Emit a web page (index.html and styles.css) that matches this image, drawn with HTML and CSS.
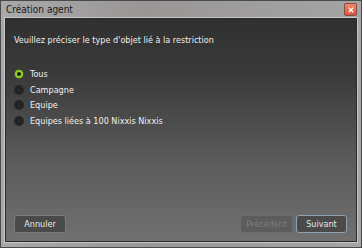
FILE: index.html
```html
<!DOCTYPE html>
<html lang="fr">
<head>
<meta charset="UTF-8" />
<title>Création agent</title>
<link rel="stylesheet" href="styles.css">
</head>
<body>
<div class="window">
  <div class="titlebar">
    <span class="title">Création agent</span>
    <span class="close" aria-label="Fermer">
      <svg viewBox="0 0 8 8" width="6" height="6"><path d="M1 1L7 7M7 1L1 7" stroke="#fff" stroke-width="1.6"/></svg>
    </span>
  </div>
  <div class="panel">
    <p class="prompt">Veuillez préciser le type d'objet lié à la restriction</p>
    <ul class="choices">
      <li class="choice selected"><span class="radio"></span>Tous</li>
      <li class="choice"><span class="radio"></span>Campagne</li>
      <li class="choice"><span class="radio"></span>Equipe</li>
      <li class="choice"><span class="radio"></span>Equipes liées à 100 Nixxis Nixxis</li>
    </ul>
    <div class="actions">
      <button class="btn">Annuler</button>
      <span class="spacer"></span>
      <button class="btn" disabled>Précédent</button>
      <button class="btn primary">Suivant</button>
    </div>
  </div>
</div>
</body>
</html>
```

FILE: styles.css
```css
body {
  margin: 0;
  background: #fff;
  font-family: "Liberation Sans Narrow", "DejaVu Sans Condensed", "Open Sans", sans-serif;
}
.window {
  width: 362px;
  height: 248px;
  box-sizing: border-box;
  border: 1px solid #4a4a4a;
  background: linear-gradient(90deg, #a9a9a9, #9a9696 40%, #a4a4a4);
  padding: 0 4px 5px 4px;
  display: flex;
  flex-direction: column;
}
.titlebar {
  height: 17px;
  display: flex;
  align-items: center;
  justify-content: space-between;
}
.title {
  font-size: 10px;
  color: #1a1a1a;
  padding-left: 1px;
}
.close {
  width: 11px;
  height: 11px;
  border: 1px solid #8a4a40;
  border-radius: 2px;
  background: linear-gradient(#f08a70, #d9533a);
  display: flex;
  align-items: center;
  justify-content: center;
}
.panel {
  flex: 1;
  border: 1px solid #2a2a2a;
  box-shadow: 0 0 0 1px #c8c8c8;
  background: linear-gradient(#303030, #3a3a3a 25%, #5c5c5c 65%, #707070);
  display: flex;
  flex-direction: column;
  color: #f0f0f0;
  font-size: 9px;
}
.prompt {
  margin: 16px 0 0 8px;
}
.choices {
  list-style: none;
  margin: 23px 0 0 9px;
  padding: 0;
  display: flex;
  flex-direction: column;
  gap: 3.5px;
}
.choice {
  display: flex;
  align-items: center;
  height: 12px;
}
.radio {
  width: 8px;
  height: 8px;
  border-radius: 50%;
  background: radial-gradient(#2a2a2a, #1a1a1a);
  box-shadow: 0 0 0 1px #262626;
  margin-right: 7px;
}
.selected .radio {
  box-sizing: border-box;
  border: 2px solid #8fd12a;
  background: #1c1c1c;
  box-shadow: 0 0 2px #6a9a20;
}
.actions {
  margin-top: auto;
  display: flex;
  gap: 3px;
  padding: 0 9px 8px 8px;
}
.spacer {
  flex: 1;
}
.btn {
  height: 18px;
  width: 52px;
  padding: 0;
  font-family: inherit;
  font-size: 9px;
  color: #e8e8e8;
  background: #4a4a4a;
  border: 1px solid #7a7a7a;
  border-radius: 3px;
}
.btn:disabled {
  width: 53px;
  color: #7e7e7e;
  background: #5c5c5c;
  border-color: #6c6c6c;
}
.btn.primary {
  border-color: #8ea2b4;
  width: 51px;
}
```
